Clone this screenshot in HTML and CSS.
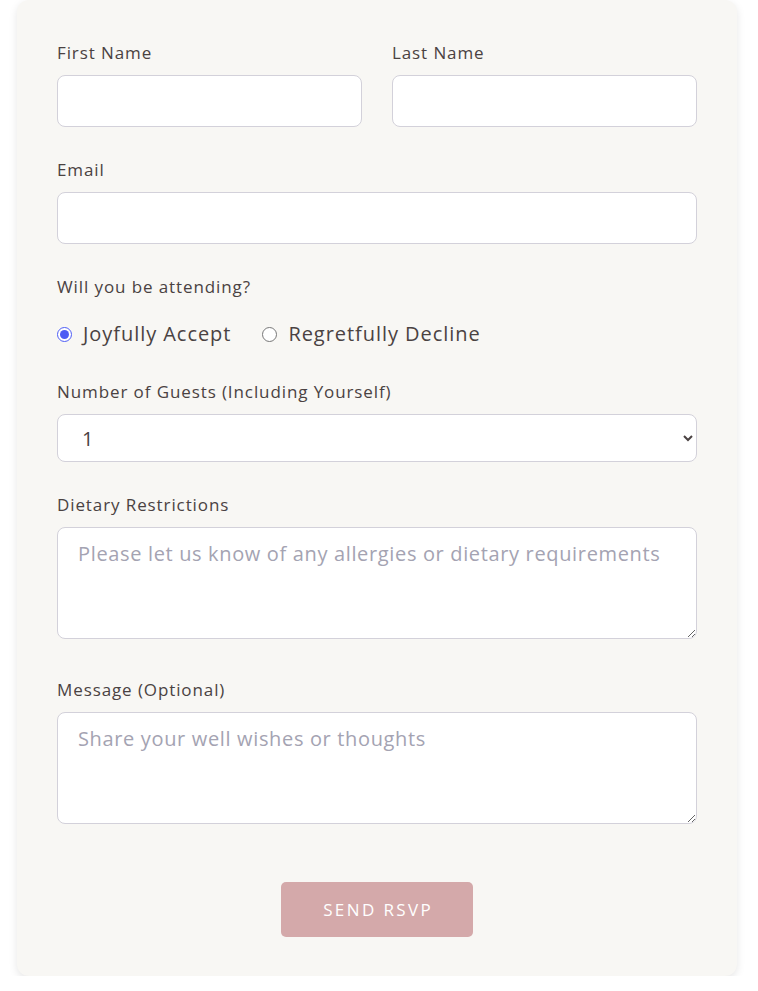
FILE: index.html
```html
<!DOCTYPE html>
<html lang="en">
<head>
<meta charset="utf-8">
<title>RSVP</title>
<link rel="stylesheet" href="styles.css">
</head>
<body>
<div class="card">
  <form class="rsvp">
    <div class="row">
      <div class="group">
        <label class="label" for="first">First Name</label>
        <input class="field" id="first" type="text">
      </div>
      <div class="group">
        <label class="label" for="last">Last Name</label>
        <input class="field" id="last" type="text">
      </div>
    </div>
    <div class="group">
      <label class="label" for="email">Email</label>
      <input class="field" id="email" type="email">
    </div>
    <div class="group radios-group">
      <span class="label">Will you be attending?</span>
      <div class="radios">
        <label class="radio"><input type="radio" name="att" checked> Joyfully Accept</label>
        <label class="radio"><input type="radio" name="att"> Regretfully Decline</label>
      </div>
    </div>
    <div class="group">
      <label class="label" for="guests">Number of Guests (Including Yourself)</label>
      <select class="field select" id="guests">
        <option>1</option><option>2</option><option>3</option>
      </select>
    </div>
    <div class="group area-group">
      <label class="label" for="diet">Dietary Restrictions</label>
      <textarea class="field area" id="diet" placeholder="Please let us know of any allergies or dietary requirements"></textarea>
    </div>
    <div class="group area-group">
      <label class="label" for="msg">Message (Optional)</label>
      <textarea class="field area" id="msg" placeholder="Share your well wishes or thoughts"></textarea>
    </div>
    <div class="actions">
      <button class="submit" type="button">Send RSVP</button>
    </div>
  </form>
</div>
</body>
</html>
```
FILE: styles.css
```css
* { box-sizing: border-box; }
html, body { margin: 0; padding: 0; background: #ffffff; }
body {
  font-family: "Open Sans", "Liberation Sans", sans-serif;
  color: #4a4242;
  padding: 0 21px 0 17px;
}
.card {
  background: #f8f7f4;
  border-radius: 12px;
  box-shadow: 0 3px 8px rgba(0,0,0,0.10);
  padding: 41px 40px 39px;
}
.row {
  display: grid;
  grid-template-columns: 1fr 1fr;
  gap: 30px;
}
.group { margin-bottom: 31px; }
.area-group { margin-bottom: 39px; }
.label {
  display: block;
  font-size: 17px;
  line-height: 24px;
  margin-bottom: 10px;
  letter-spacing: 0.9px;
  color: #4a4242;
}
.field {
  display: block;
  width: 100%;
  height: 52px;
  border: 1px solid #d3d1da;
  border-radius: 8px;
  background: #fff;
  font-family: inherit;
  font-size: 20px;
  padding: 0 20px;
  color: #4a4242;
  letter-spacing: 0.65px;
}
.select { height: 48px; padding-left: 20px; padding-right: 8px; }
.area {
  height: 112px;
  padding: 12px 20px;
  resize: vertical;
  line-height: 28px;
}
.area::placeholder { color: #a4a3b2; }
.radios-group { margin-bottom: 26px; }
.radios-group .label { margin-bottom: 15px; }
.radios { display: flex; gap: 31px; line-height: 40px; }
.radio {
  display: flex;
  align-items: center;
  font-size: 20px;
  letter-spacing: 0.95px;
  color: #4a4242;
}
.radio input {
  margin: 0 11px 0 0;
  width: 15px;
  height: 15px;
  accent-color: #4d5cf4;
}
.actions {
  display: flex;
  justify-content: center;
  padding-top: 19px;
}
.submit {
  width: 192px;
  height: 55px;
  border: 0;
  border-radius: 5px;
  background: #d4a9aa;
  color: #fff;
  font-family: inherit;
  font-size: 17px;
  letter-spacing: 2.4px;
  text-indent: 2.4px;
  text-transform: uppercase;
}
```
